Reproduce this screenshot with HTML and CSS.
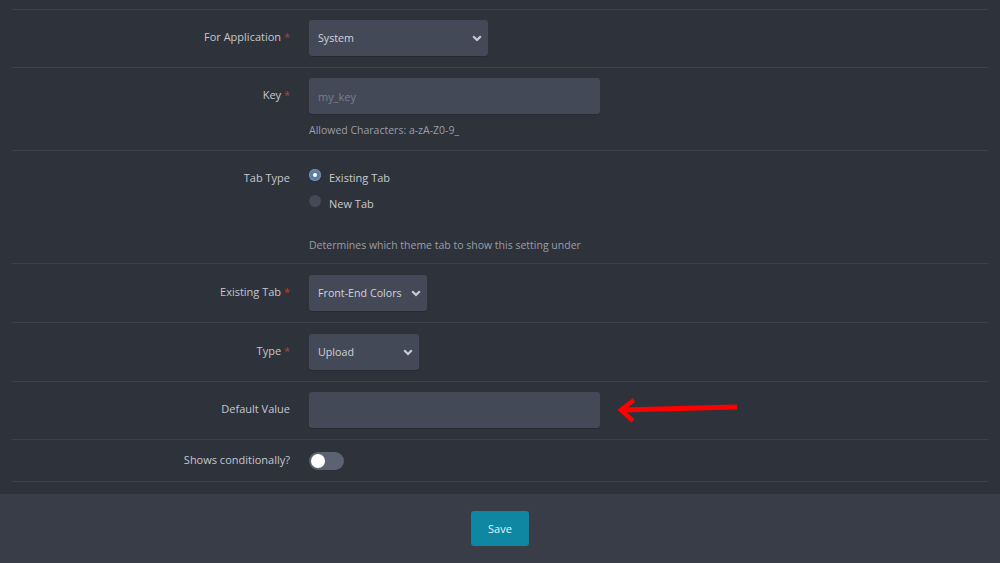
FILE: index.html
```html
<!DOCTYPE html>
<html>
<head>
<meta charset="utf-8">
<link rel="stylesheet" href="styles.css">
</head>
<body>
<div class="page">
  <form class="form">
    <div class="row">
      <label class="lbl">For Application <span class="req">*</span></label>
      <div class="ctl">
        <div class="select w179"><span>System</span><svg class="chev" viewBox="0 0 10 7" width="10" height="7"><path d="M1.2 1.2 L5 5 L8.8 1.2" fill="none" stroke="#c9ccd3" stroke-width="2.2"/></svg></div>
      </div>
    </div>
    <div class="row">
      <label class="lbl">Key <span class="req">*</span></label>
      <div class="ctl">
        <div class="input w291"><span class="ph">my_key</span></div>
        <div class="help">Allowed Characters: a-zA-Z0-9_</div>
      </div>
    </div>
    <div class="row row-radio">
      <label class="lbl">Tab Type</label>
      <div class="ctl">
        <div class="radios">
          <div class="radio"><span class="dot on"></span>Existing Tab</div>
          <div class="radio"><span class="dot"></span>New Tab</div>
        </div>
        <div class="help help-lg">Determines which theme tab to show this setting under</div>
      </div>
    </div>
    <div class="row tall">
      <label class="lbl">Existing Tab <span class="req">*</span></label>
      <div class="ctl">
        <div class="select w118"><span>Front-End Colors</span><svg class="chev" viewBox="0 0 10 7" width="10" height="7"><path d="M1.2 1.2 L5 5 L8.8 1.2" fill="none" stroke="#c9ccd3" stroke-width="2.2"/></svg></div>
      </div>
    </div>
    <div class="row tall">
      <label class="lbl">Type <span class="req">*</span></label>
      <div class="ctl">
        <div class="select w110"><span>Upload</span><svg class="chev" viewBox="0 0 10 7" width="10" height="7"><path d="M1.2 1.2 L5 5 L8.8 1.2" fill="none" stroke="#c9ccd3" stroke-width="2.2"/></svg></div>
      </div>
    </div>
    <div class="row row-arrow">
      <label class="lbl">Default Value</label>
      <div class="ctl">
        <div class="input w291"></div>
      </div>
      <svg class="arrow" viewBox="0 0 130 30" width="130" height="30"><path d="M10 15 L126 12" stroke="#ff0000" stroke-width="5" fill="none"/><path d="M23 5 L10 15 L22 26" stroke="#ff0000" stroke-width="4.5" fill="none" stroke-linejoin="miter"/></svg>
    </div>
    <div class="row row-toggle">
      <label class="lbl lbl-sm">Shows conditionally?</label>
      <div class="ctl">
        <div class="toggle"><span class="knob"></span></div>
      </div>
    </div>
  </form>
  <div class="footer">
    <button class="btn" type="button">Save</button>
  </div>
</div>
</body>
</html>
```

FILE: styles.css
```css
* { box-sizing: border-box; }
html, body {
  margin: 0;
  padding: 0;
  background: #2e323b;
  font-family: "Open Sans", "Noto Sans", sans-serif;
  font-size: 11px;
  color: #c7cad0;
  overflow: hidden;
}
.page {
  height: 563px;
  display: flex;
  flex-direction: column;
}
.form {
  margin: 9px 12px 0;
  border-top: 1px solid #3d414c;
}
.row {
  display: grid;
  grid-template-columns: 278px 1fr;
  column-gap: 19px;
  padding: 10px 0 11px;
  border-bottom: 1px solid #3d414c;
  position: relative;
}
.row.tall { padding-top: 11px; }
.lbl {
  text-align: right;
  line-height: 34px;
  color: #c4c7cd;
}
.req { color: #c0392b; }
.ctl { display: flex; flex-direction: column; align-items: flex-start; }
.select, .input {
  height: 36px;
  background: #444957;
  border-radius: 3px;
  display: flex;
  align-items: center;
  padding: 0 6px 0 9px;
  color: #d0d3d9;
  box-shadow: 0 1px 0 rgba(0,0,0,0.15);
}
.select { justify-content: space-between; gap: 8px; font-size: 10.7px; }
.chev { flex: none; margin-top: 1px; }
.w179 { width: 179px; }
.w291 { width: 291px; }
.w118 { width: 118px; }
.w110 { width: 110px; }
.ph { color: #7b7f8a; }
.help {
  margin-top: 8px;
  line-height: 16px;
  color: #9a9ea8;
  font-size: 10.5px;
  padding-bottom: 1px;
}
.row-radio { padding-bottom: 9px; }
.help-lg { margin-top: 21px; }
.radios { margin-top: 3px; margin-bottom: 0; }
.radio {
  height: 26px;
  display: flex;
  align-items: center;
  color: #c7cad0;
}
.dot {
  width: 12px;
  height: 12px;
  border-radius: 50%;
  background: #454957;
  margin-right: 8px;
  margin-top: -4px;
  position: relative;
}
.dot.on {
  background: #5d7da3;
  box-shadow: 0 0 0 1px #6f8cb0 inset;
}
.dot.on::after {
  content: "";
  position: absolute;
  left: 4px;
  top: 4px;
  width: 4px;
  height: 4px;
  border-radius: 50%;
  background: #fff;
}
.row-toggle { padding: 12px 0 11px; }
.lbl-sm { line-height: 16px; }
.toggle {
  width: 35px;
  height: 18px;
  border-radius: 9px;
  background: #5b6272;
  position: relative;
}
.knob {
  position: absolute;
  left: 2px;
  top: 2px;
  width: 14px;
  height: 14px;
  border-radius: 50%;
  background: #fff;
}
.arrow {
  position: absolute;
  left: 599px;
  top: 13px;
}
.footer {
  margin-top: 12px;
  flex: 1;
  background: #393d48;
  display: flex;
  justify-content: center;
  align-items: flex-start;
  padding-top: 17px;
}
.btn {
  width: 58px;
  height: 35px;
  border: none;
  border-radius: 3px;
  background: #0f87a2;
  color: #e6f2f5;
  font-family: "Open Sans", "Noto Sans", sans-serif;
  font-size: 11px;
  padding: 0;
}
```
